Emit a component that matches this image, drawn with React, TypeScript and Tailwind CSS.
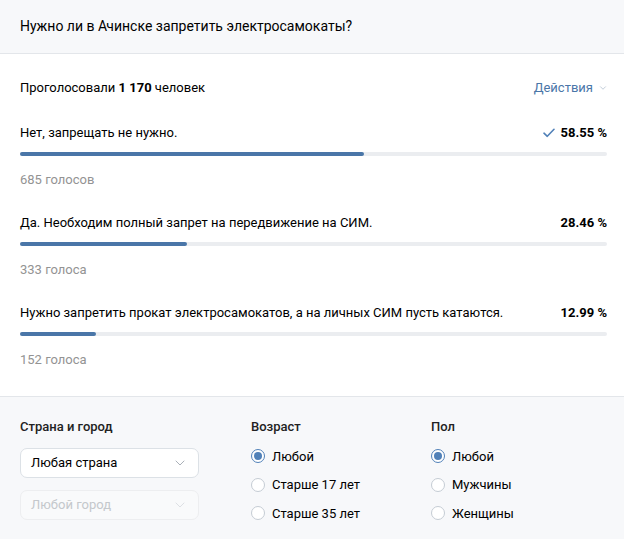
import { ChevronDown } from 'lucide-react';

const options = [
  { text: 'Нет, запрещать не нужно.', percent: '58.55', votes: '685 голосов', fill: 344, mine: true },
  { text: 'Да. Необходим полный запрет на передвижение на СИМ.', percent: '28.46', votes: '333 голоса', fill: 167, mine: false },
  { text: 'Нужно запретить прокат электросамокатов, а на личных СИМ пусть катаются.', percent: '12.99', votes: '152 голоса', fill: 76, mine: false },
];

function Radio({ label, checked }: { label: string; checked?: boolean }): JSX.Element {
  return (
    <div className="flex h-[28.5px] items-center">
      <span
        className={
          'flex h-[14px] w-[14px] items-center justify-center rounded-full border bg-white ' +
          (checked ? 'border-[#5181b8]' : 'border-[#c5ccd4]')
        }
      >
        {checked && <span className="h-[8px] w-[8px] rounded-full bg-[#5181b8]" />}
      </span>
      <span className="ml-[7px] text-[13px] text-black">{label}</span>
    </div>
  );
}

function Select({ label, disabled }: { label: string; disabled?: boolean }): JSX.Element {
  return (
    <div
      className={
        'flex h-[30px] w-[179px] items-center justify-between rounded-[7px] border pl-[10px] pr-[10px] ' +
        (disabled ? 'border-[#edeef0] bg-[#f9fafb] text-[#c4c8cc]' : 'border-[#dce1e6] bg-white text-black')
      }
    >
      <span className="text-[13px]">{label}</span>
      <ChevronDown size={16} strokeWidth={1.5} className={disabled ? 'text-[#dde0e4]' : 'text-[#aab0b8]'} />
    </div>
  );
}

export default function App(): JSX.Element {
  return (
    <div className="h-[539px] w-[624px] bg-white font-['Roboto',sans-serif] text-black">
      <div className="flex h-[54px] items-center border-b border-[#e3e6ea] bg-[#f7f8fa] pl-[20px] pb-[2px]">
        <h1 className="text-[14px] leading-[18px]">Нужно ли в Ачинске запретить электросамокаты?</h1>
      </div>

      <div className="pl-[20px] pr-[17px] pt-[25px] pb-[27px]">
        <div className="flex h-[18px] items-center justify-between text-[13px]">
          <p>
            Проголосовали <b className="font-bold">1 170</b> человек
          </p>
          <span className="-mr-[1px] flex items-center text-[#4a76a8]">
            Действия
            <ChevronDown size={10} strokeWidth={1.6} className="ml-[5px] text-[#a3b4c6]" />
          </span>
        </div>

        {options.map((option, index) => (
          <div key={index} className={index === 0 ? 'mt-[27px]' : 'mt-[25px]'}>
            <div className="flex h-[18px] items-center justify-between text-[13px]">
              <span>{option.text}</span>
              <span className="flex items-center font-bold">
                {option.mine && (
                  <svg width="12" height="10" viewBox="0 0 12 10" className="mr-[6px]">
                    <path d="M1 5.2 L4.3 8.3 L11 1.3" fill="none" stroke="#5181b8" strokeWidth="1.6" strokeLinecap="round" strokeLinejoin="round" />
                  </svg>
                )}
                {option.percent} %
              </span>
            </div>
            <div className="mt-[10px] h-[4px] w-full rounded-full bg-[#ebedf0]">
              <div className="h-[4px] rounded-full bg-[#4a76a8]" style={{ width: option.fill }} />
            </div>
            <p className="mt-[15px] h-[18px] text-[13px] leading-[18px] text-[#939393]">{option.votes}</p>
          </div>
        ))}
      </div>

      <div className="flex h-[143px] border-t border-[#e3e6ea] bg-[#f7f8fa] pl-[20px] pt-[21px]">
        <div className="w-[231px]">
          <p className="h-[18px] text-[13px] font-medium leading-[18px] text-[#222]">Страна и город</p>
          <div className="mt-[12px] flex flex-col gap-[12px]">
            <Select label="Любая страна" />
            <Select label="Любой город" disabled />
          </div>
        </div>
        <div className="w-[180px]">
          <p className="h-[18px] text-[13px] font-medium leading-[18px] text-[#222]">Возраст</p>
          <div className="mt-[6px]">
            <Radio label="Любой" checked />
            <Radio label="Старше 17 лет" />
            <Radio label="Старше 35 лет" />
          </div>
        </div>
        <div>
          <p className="h-[18px] text-[13px] font-medium leading-[18px] text-[#222]">Пол</p>
          <div className="mt-[6px]">
            <Radio label="Любой" checked />
            <Radio label="Мужчины" />
            <Radio label="Женщины" />
          </div>
        </div>
      </div>
    </div>
  );
}
